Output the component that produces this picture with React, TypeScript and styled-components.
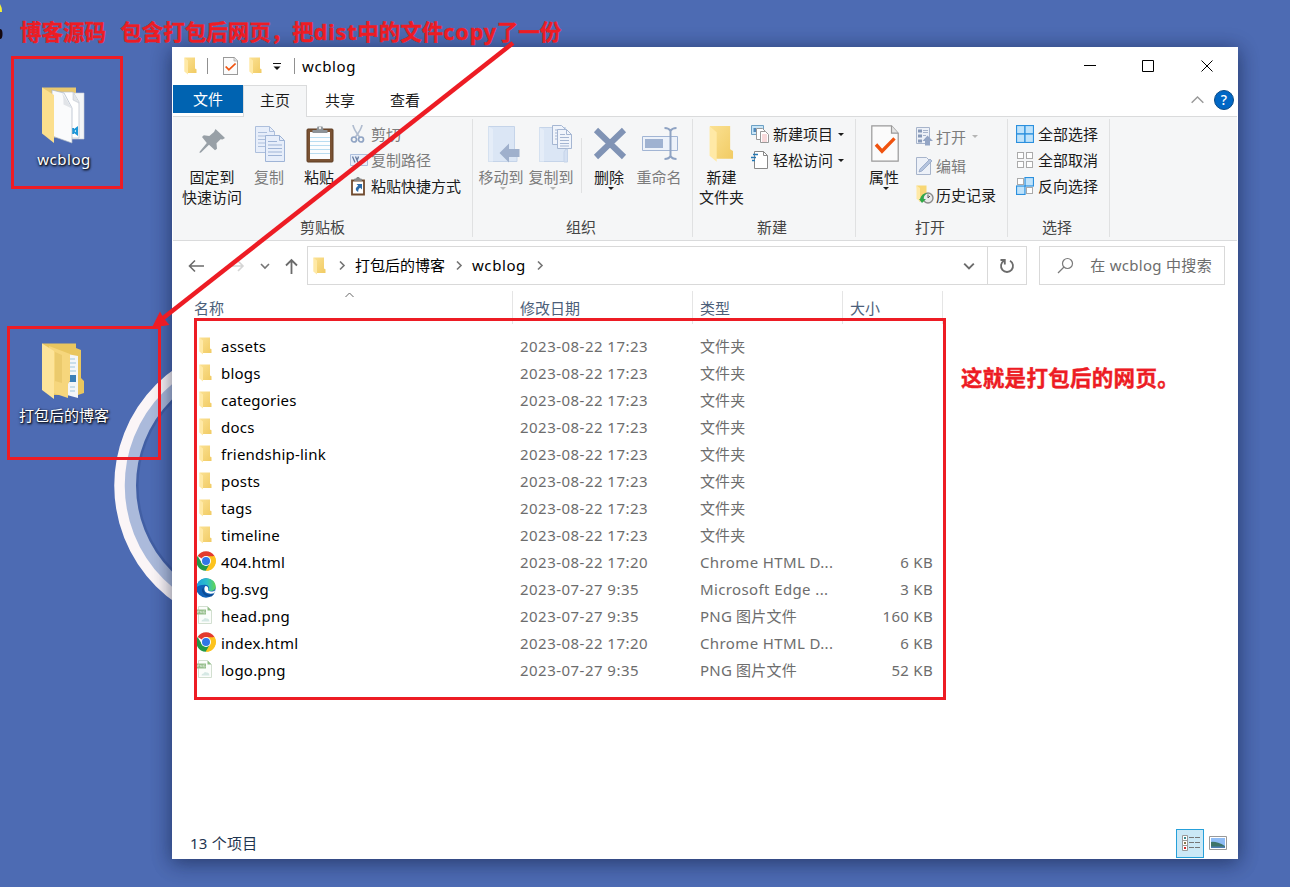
import React from "react";
import styled, { createGlobalStyle } from "styled-components";

const Global = createGlobalStyle`
  * { box-sizing: border-box; }
  body { margin: 0; background: #4d6bb3; }
  body, svg text { font-family: "Noto Sans", "Noto Sans CJK SC", sans-serif; }
`;

const Desktop = styled.div`
  position: relative;
  width: 1290px;
  height: 887px;
  overflow: hidden;
  background: #4d6bb3;
  font-size: 15px;
  line-height: 20px;
  color: #1b1b1b;
  white-space: nowrap;
`;
const Wallpaper = styled.svg`
  position: absolute;
  inset: 0;
`;
const Shortcut = styled.div<{ $top: number }>`
  position: absolute;
  left: 4px;
  top: ${(p) => p.$top}px;
  width: 120px;
  display: flex;
  flex-direction: column;
  align-items: center;
`;
const ShortcutLabel = styled.span<{ $ls?: number }>`
  margin-top: 3px;
  color: #fff;
  letter-spacing: ${(p) => p.$ls ?? 0}px;
  text-shadow: 1px 1px 2px #000, 0 1px 3px rgba(0, 0, 0, 0.8);
`;

const Window = styled.main`
  position: absolute;
  left: 172px;
  top: 47px;
  width: 1066px;
  height: 812px;
  padding: 0 1px;
  background: #fff;
  display: flex;
  flex-direction: column;
  box-shadow: 0 2px 18px rgba(10, 20, 50, 0.42), 0 6px 20px rgba(10, 20, 50, 0.2);
`;
const TitleBar = styled.header`
  height: 38px;
  padding: 0 24px 0 11px;
  display: flex;
  align-items: center;
`;
const TitleDivider = styled.i<{ $m: string }>`
  width: 1px;
  height: 16px;
  margin: ${(p) => p.$m};
  background: #909090;
`;
const Gap = styled.i<{ $w: number }>`
  flex: none;
  width: ${(p) => p.$w}px;
`;
const Fill = styled.i`
  flex: 1;
`;
const Text = styled.span<{ $ls?: number; $color?: string }>`
  letter-spacing: ${(p) => p.$ls ?? 0}px;
  color: ${(p) => p.$color ?? "inherit"};
`;
const WindowControls = styled.div`
  display: flex;
  align-items: center;
  gap: 46px;

  svg:last-child {
    margin-left: 1px;
  }
`;

const TabBar = styled.nav`
  height: 32px;
  display: flex;
  border-bottom: 1px solid #dadbdc;
`;
const FileTab = styled.div`
  width: 70px;
  height: 28px;
  background: #0063b1;
  color: #fff;
  text-align: center;
  line-height: 29px;
`;
const Tab = styled.div<{ $active?: boolean; $w: number }>`
  width: ${(p) => p.$w}px;
  height: 32px;
  text-align: center;
  line-height: ${(p) => (p.$active ? 29 : 31)}px;
  background: ${(p) => (p.$active ? "#f5f6f7" : "transparent")};
  border: ${(p) => (p.$active ? "1px solid #dadbdc" : "0")};
  border-bottom: 0;
`;
const TabTools = styled.div`
  margin-left: auto;
  padding: 0 3px 2px 0;
  display: flex;
  align-items: center;
  gap: 10px;
`;

const Ribbon = styled.section`
  height: 124px;
  background: #f5f6f7;
  border-bottom: 1px solid #dadbdc;
  display: flex;
  padding: 2px 0 3px;
`;
const Group = styled.div<{ $w: number }>`
  width: ${(p) => p.$w}px;
  border-right: 1px solid #e0e1e2;
  display: flex;
  flex-direction: column;
`;
const GroupBody = styled.div<{ $pl: number }>`
  flex: 1;
  display: flex;
  padding-left: ${(p) => p.$pl}px;
`;
const GroupLabel = styled.div<{ $pr?: number }>`
  height: 20px;
  padding-right: ${(p) => p.$pr ?? 2}px;
  text-align: center;
  color: #444;
`;
const BigButton = styled.div<{ $w: number; $off?: boolean }>`
  flex: none;
  width: ${(p) => p.$w}px;
  padding-top: 6px;
  display: flex;
  flex-direction: column;
  align-items: center;
  color: ${(p) => (p.$off ? "#7c7c7c" : "#1b1b1b")};
`;
const BigIcon = styled.div<{ $ml?: number }>`
  height: 42px;
  margin-left: ${(p) => p.$ml ?? 0}px;
  display: flex;
  align-items: flex-start;
`;
const Caret = styled.i<{ $off?: boolean; $m?: string }>`
  display: block;
  width: 0;
  height: 0;
  margin: ${(p) => p.$m ?? "0 0 0 3px"};
  border: 3.5px solid transparent;
  border-bottom: 0;
  border-top-color: ${(p) => (p.$off ? "#b5b5b5" : "#1b1b1b")};
`;
const SmallList = styled.div<{ $row: number; $ml: number; $pt: number }>`
  margin-left: ${(p) => p.$ml}px;
  padding-top: ${(p) => p.$pt}px;
  display: grid;
  grid-auto-rows: ${(p) => p.$row}px;
  align-content: start;
`;
const SmallButton = styled.div<{ $off?: boolean; $icon?: number }>`
  display: grid;
  grid-template-columns: ${(p) => p.$icon ?? 21}px auto auto;
  align-items: center;
  justify-content: start;
  color: ${(p) => (p.$off ? "#7c7c7c" : "#1b1b1b")};
`;
const InnerDivider = styled.i`
  width: 1px;
  height: 55px;
  margin: 19px 2px 0 5px;
  background: #e0e1e2;
`;

const AddressRow = styled.section`
  height: 50px;
  padding: 5px 12px 6px 15px;
  display: flex;
  align-items: center;
`;
const AddressBox = styled.div`
  width: 721px;
  height: 39px;
  border: 1px solid #d9d9d9;
  display: flex;
  align-items: center;
  padding-left: 5px;
  color: #000;
`;
const BoxText = styled.span<{ $ls?: number }>`
  letter-spacing: ${(p) => p.$ls ?? 0}px;
  padding-bottom: 2px;
`;
const RefreshCell = styled.div`
  width: 39px;
  height: 37px;
  border-left: 1px solid #d9d9d9;
  display: grid;
  place-items: center;
`;
const SearchBox = styled.div`
  width: 186px;
  height: 39px;
  margin-left: 12px;
  border: 1px solid #d9d9d9;
  display: flex;
  align-items: center;
  padding-left: 17px;
  gap: 16px;
  color: #6d6d6d;
`;

const columns = "340px 180px 150px 100px";
const HeaderRow = styled.div`
  height: 33px;
  display: grid;
  grid-template-columns: ${columns};
`;
const HeaderCell = styled.div<{ $pl: number }>`
  position: relative;
  padding: 7px 0 0 ${(p) => p.$pl}px;
  border-right: 1px solid #e5e5e5;
  color: #4c607a;
`;
const SortMark = styled.svg`
  position: absolute;
  left: 172px;
  top: 1px;
`;
const FileList = styled.div`
  flex: 1;
  padding-top: 8px;
`;
const FileRow = styled.div`
  height: 27px;
  display: grid;
  grid-template-columns: ${columns};
  align-items: center;
  color: #6d6d6d;
`;
const NameCell = styled.div`
  display: grid;
  grid-template-columns: 25px auto;
  padding-left: 23px;
  align-items: center;
  color: #000;
  letter-spacing: 0.22px;
`;
const Cell = styled.div<{ $ls?: number; $right?: boolean }>`
  padding-left: 7px;
  padding-right: ${(p) => (p.$right ? 10 : 0)}px;
  text-align: ${(p) => (p.$right ? "right" : "left")};
  letter-spacing: ${(p) => p.$ls ?? 0}px;
`;
const StatusBar = styled.footer`
  height: 31px;
  padding: 0 10px 1px 17px;
  display: flex;
  align-items: center;
  color: #1f3550;
`;
const ViewButton = styled.div`
  width: 28px;
  height: 29px;
  margin-right: 5px;
  background: #cbe8f6;
  border: 1px solid #26a0da;
  display: grid;
  place-items: center;
  padding-left: 2px;
`;

const Mark = styled.div<{ $x: number; $y: number; $w: number; $h: number }>`
  position: absolute;
  left: ${(p) => p.$x}px;
  top: ${(p) => p.$y}px;
  width: ${(p) => p.$w}px;
  height: ${(p) => p.$h}px;
  border: 3px solid #ed1c24;
`;
const Note = styled.div<{ $x: number; $y: number; $ls: number }>`
  position: absolute;
  left: ${(p) => p.$x}px;
  top: ${(p) => p.$y}px;
  font-size: 21.5px;
  line-height: 30px;
  font-weight: 700;
  color: #ed1c24;
  -webkit-text-stroke: 0.4px #ed1c24;
  letter-spacing: ${(p) => p.$ls}px;
  white-space: pre;
`;

const Folder = ({ w = 13, h = 18 }: { w?: number; h?: number }) => (
  <svg width={w} height={h} viewBox="0 0 13 18" preserveAspectRatio="none">
    <defs>
      <linearGradient id="fold" x1="0" x2="1" y1="0" y2="1">
        <stop offset="0" stopColor="#fbe193" />
        <stop offset="1" stopColor="#f1cb63" />
      </linearGradient>
    </defs>
    <path d="M.5.5h10.500v11l1.500.8V16H3z" fill="url(#fold)" />
    <path d="M.3.6 4 3.400v14L.3 14.600z" fill="#ffe9a6" />
  </svg>
);

const CheckDoc = ({ w = 15, h = 18 }: { w?: number; h?: number }) => (
  <svg width={w} height={h} viewBox="0 0 28 36" preserveAspectRatio="none">
    <path d="M.8.8H20.500L27.200 8V35.200H.8z" fill="#fbfbfb" stroke="#999" strokeWidth={w < 20 ? 2 : 1.2} />
    <path d="M20.500.8V8h6.700" fill="#e4e4e4" stroke="#999" strokeWidth="1.200" />
    <path d="M5 19l6 6.500L23.500 13" fill="none" stroke="#f0530f" strokeWidth="3.400" />
  </svg>
);

const Chevron = ({ dir = "right", color = "#757575", w = 10, sw = 1.6 }: { dir?: "right" | "down" | "up"; color?: string; w?: number; sw?: number }) => (
  <svg width={w} height={w} viewBox="0 0 10 10" fill="none" stroke={color} strokeWidth={sw}>
    <path d={dir === "right" ? "M3 .5l4 4-4 4" : dir === "down" ? "M1 3l4 4 4-4" : "M.5 7.500 5 3l4.500 4.500"} />
  </svg>
);

const PinIcon = () => (
  <svg width="28" height="30" viewBox="0 0 28 30" fill="#98a0a7">
    <path d="M17.500 4 27 13l-2.500 1.500-2-.3-4 4 .5 5.500-2 1.500-6-5.500L3 27.500 1.500 28l.3-1.600 7-8.400L4 12l1.800-1.700 5.500.6 4.700-4z" />
  </svg>
);
const CopyIcon = () => (
  <svg width="32" height="38" viewBox="0 0 32 38" fill="#e7eefa" stroke="#adbfdc">
    <path d="M1.500 1.500h14l5 5v21h-19z" />
    <path d="M15.500 1.500v5h5M4 7.500h9M4 11h14M4 14.500h14M4 18h14M4 21.500h14" fill="none" />
    <path d="M11.500 10.500h14l5 5v21h-19z" stroke="#9fb4d6" />
    <path d="M25.500 10.500v5h5M14 16.500h9M14 20h14M14 23.500h14M14 27h14M14 30.500h14" fill="none" stroke="#9fb4d6" />
  </svg>
);
const PasteIcon = () => (
  <svg width="28" height="38" viewBox="0 0 28 38">
    <rect x="1" y="4" width="26" height="33" rx="1" fill="#7a5233" stroke="#5e3c22" />
    <path d="M4 7h20v27H4z" fill="#fcfdfe" />
    <path d="M4 12.500h20M4 16.500h20M4 20.500h20M4 24.500h20M4 28.500h20" stroke="#b9dcf0" />
    <path d="M6.500 8V5h4l1-3.500h5l1 3.500h4v3z" fill="#8c9297" />
    <circle cx="14" cy="3" r="1.200" fill="#eee" />
  </svg>
);
const ScissorsIcon = () => (
  <svg width="15" height="20" viewBox="0 0 15 20" fill="none" stroke="#8fa3c3" strokeWidth="1.700">
    <path d="M3 1c.5 4 3.500 8 6.500 12M12 1c-.5 4-3.500 8-6.500 12" stroke="#b0bccf" />
    <circle cx="4" cy="15.500" r="2.500" />
    <circle cx="11" cy="15.500" r="2.500" />
  </svg>
);
const PathIcon = () => (
  <svg width="18" height="12" viewBox="0 0 18 12">
    <path d="M.5.5h17v11H.5z" fill="#e7eefa" stroke="#adbfdc" />
    <path d="M2.500 2.500l2.500 6M5.500 2.500l2.500 6M8.500 2.500l-1 3" fill="none" stroke="#64789c" strokeWidth="1.300" />
    <path d="M11 8.500h1M13 8.500h1" stroke="#7488aa" />
  </svg>
);
const PasteLinkIcon = () => (
  <svg width="16" height="19" viewBox="0 0 16 19">
    <path d="M2 3.500h12v14H2z" fill="#fff" stroke="#704a2e" strokeWidth="1.800" />
    <path d="M4.500 3.500h7V2H9.500L9 .5H7L6.500 2h-2z" fill="#888" stroke="#888" />
    <path d="M6.500 7H12v5.500l-1.800-1.800c-1.700 1-2 2.500-2 4.300C4.500 13 5.500 10.500 8.300 8.800z" fill="#2c6cab" />
  </svg>
);
const MoveIcon = () => (
  <svg width="33" height="38" viewBox="0 0 33 38">
    <path d="M1.500 1.500h26v24l2.500 2v9H1.500z" fill="#dbe6f5" stroke="#c5d4e9" />
    <path d="M1.500 1.500 6 4v32.500H1.500z" fill="#e5edf8" />
    <path d="M12.500 28 22 18.500V24h10.500v8H22v5.500z" fill="#9fb0cc" />
  </svg>
);
const CopyToIcon = () => (
  <svg width="34" height="39" viewBox="0 0 34 39">
    <path d="M1.500 2.500h26v34h-26z" fill="#dbe6f5" stroke="#c5d4e9" />
    <path d="M1.500 2.500 6 5v31.500H1.500z" fill="#e5edf8" />
    <path d="M14.500.5h9l4 4v15h-13z" fill="#f0f4fb" stroke="#a5b6d2" />
    <path d="M17 5h6M17 8h8M17 11h8M17 14h8" stroke="#a5b6d2" />
    <path d="M19.500 4.500h9l5 5v14h-14z" fill="#f0f4fb" stroke="#a5b6d2" />
    <path d="M28.500 4.500v5h5M22 9.500h5M22 12.500h9M22 15.500h9M22 18.500h9M22 21h9" fill="none" stroke="#a5b6d2" />
    <path d="M26 37V27q1-3 3.500-3v13z" fill="#d4e0f2" stroke="#c5d4e9" />
  </svg>
);
const DeleteIcon = () => (
  <svg width="34" height="36" viewBox="0 0 34 36">
    <path d="M3 5l28 27M31 5 3 32" stroke="#8093b5" strokeWidth="6" />
  </svg>
);
const RenameIcon = () => (
  <svg width="37" height="36" viewBox="0 0 37 36">
    <path d="M.5 11.500h35v14H.5z" fill="#edf2fa" stroke="#a2b5d4" />
    <path d="M3 14h18v9H3z" fill="#9fb2d1" />
    <path d="M22.500 3q4.500 0 6 3 1.500-3 6-3M28.500 5v27M22.500 34q4.500 0 6-3 1.500 3 6 3" fill="none" stroke="#8fa3c3" strokeWidth="2" />
  </svg>
);
const NewItemIcon = () => (
  <svg width="18" height="18" viewBox="0 0 18 18">
    <path d="M.5.500h12v9H.5z" fill="#c9e6f8" stroke="#6ca0c4" />
    <path d="M2.500 3h2.500v4H2.500z" fill="#518abc" />
    <path d="M5.500 3.500h6l3 3v8h-9z" fill="#fff" stroke="#999" />
    <path d="M9.500 6.500h5l3 3v8h-8z" fill="#fff" stroke="#999" />
    <path d="M11 10h5M11 12h5M11 14h5M11 16h5" stroke="#f0b4b8" />
  </svg>
);
const EasyIcon = () => (
  <svg width="18" height="18" viewBox="0 0 18 18">
    <path d="M3.500.5h9l4 4v13h-13z" fill="#fff" stroke="#888" />
    <path d="M12.500.5v4h4" fill="none" stroke="#888" />
    <path d="M2 3.500h5M0 6.500h5M1 9.500h3" stroke="#2578b4" strokeWidth="1.400" />
  </svg>
);
const OpenIcon = () => (
  <svg width="17" height="19" viewBox="0 0 17 19">
    <path d="M.5.500h13v16H.5z" fill="#edf1f8" stroke="#a7b4cb" />
    <path d="M2 2.500h4v3H2zM2 7.500h4v3H2zM2 12.500h4v3H2z" fill="#8799b8" />
    <path d="M7 3.500h5M7 5.500h5M7 8.500h3" stroke="#a7b4cb" />
    <path d="M11.500 8.500 17 14h-3v4.500H9V14H6.500z" fill="#93a5c5" />
  </svg>
);
const EditIcon = () => (
  <svg width="17" height="18" viewBox="0 0 17 18">
    <path d="M.5.500h10l4 4v13H.5z" fill="#edf1f8" stroke="#a7b4cb" />
    <path d="M3 15 4 12 14 2l2 2L6 14z" fill="#b4c4de" stroke="#93a5c5" strokeWidth=".8" />
  </svg>
);
const HistoryIcon = () => (
  <svg width="18" height="19" viewBox="0 0 18 19">
    <path d="M.5.500h10v16H3z" fill="#f8d775" />
    <path d="M.5.500 4 3v13L.5 14z" fill="#ffe9a6" />
    <circle cx="12" cy="13" r="5" fill="#e9e9e9" stroke="#8b8b8b" strokeWidth="1.400" />
    <path d="M12 13V9.500M12 13l2-2" stroke="#555" />
    <path d="M4 14a8 8 0 0 1 8-6c-3 1-4.500 3-4.500 6H10l-4 4-3-4z" fill="#2fa84a" />
  </svg>
);
const SelectIcon = ({ on }: { on: boolean[] }) => (
  <svg width="18" height="18" viewBox="0 0 18 18">
    {on.map((o, i) => {
      const col = i % 2;
      const row = Math.floor(i / 2);
      return o ? (
        <rect key={i} x={col * 8.5 + 0.5} y={row * 8.5 + 0.5} width="8.5" height="8.5" fill="#bfe3fb" stroke="#2b90de" strokeWidth="1.200" />
      ) : (
        <rect key={i} x={col * 9 + 1.5} y={row * 9 + 1.5} width="6" height="6" fill="#fff" stroke="#aaa" />
      );
    })}
  </svg>
);

const ChromeIcon = () => (
  <svg width="20" height="20" viewBox="0 0 20 20">
    <path d="M10 10 1.600 5A9.800 9.800 0 0 1 18.500 5z" fill="#e33b2e" />
    <path d="M10 10 18.500 5A9.800 9.800 0 0 1 10 19.800z" fill="#fcc31e" />
    <path d="M1.600 5A9.800 9.800 0 0 0 9.800 19.800L14 12.500 6 12.300z" fill="#229a48" />
    <path d="M10 5.300h8.600A9.800 9.800 0 0 1 10 19.800l4.200-7.500z" fill="#fcc31e" />
    <circle cx="10" cy="10" r="5" fill="#fff" />
    <circle cx="10" cy="10" r="4" fill="#3076e8" />
  </svg>
);
const EdgeIcon = () => (
  <svg width="20" height="20" viewBox="0 0 20 20">
    <defs>
      <linearGradient id="edge" x1="0" x2="1">
        <stop offset="0" stopColor="#1b9de2" />
        <stop offset=".55" stopColor="#2cc0c8" />
        <stop offset="1" stopColor="#62d64f" />
      </linearGradient>
    </defs>
    <circle cx="10" cy="10" r="9.700" fill="#0f62b8" />
    <path d="M.4 9.500C1 4 5 .3 10 .3c6 0 9.700 4 9.700 8.200 0 3.200-2.500 4.500-5 4.500-2 0-3-.8-2-2 .6-1 .3-4-3.500-4.200C5 6.600 1.500 8 .4 9.500z" fill="url(#edge)" />
    <path d="M8 9c-1.500 5 2 8 6.500 7.500 1.800-.2 3-.8 4-1.500l-1 1.700-2 1.800C9 19 5.500 15 6 11z" fill="#0c4a94" />
    <path d="M9.500 8c2 0 3 1.500 2.700 3-.7 1.500.5 2.500 3 2.500 1.700 0 3.200-.6 4.300-1.600L18.300 15c-4 1.500-9.900.5-9.900-4 0-1.500.4-2.500 1.100-3z" fill="#fff" />
  </svg>
);
const PngIcon = () => (
  <svg width="18" height="18" viewBox="0 0 18 18">
    <path d="M2.500.5h9l4 4v13h-13z" fill="#fbfdfb" stroke="#d2dfd0" />
    <path d="M11.500.5v4h4z" fill="#8fbd86" />
    <path d="M0 3.500h10v5H0z" fill="#98bf8e" />
    <path d="M1.500 7V5h1.500v1H1.500M4.500 7V5l1.500 2V5M9 5H7.500v2H9V6" fill="none" stroke="#dbe9d8" strokeWidth=".6" />
    <path d="M5.500 15.500q0-2 2-2 1-2.500 3-1 2.500-.5 3 3z" fill="#d5e8e4" />
  </svg>
);

const icons = { folder: <Folder />, chrome: <ChromeIcon />, edge: <EdgeIcon />, png: <PngIcon /> };
type Kind = keyof typeof icons;
const IconSlot = styled.span<{ $kind: Kind }>`
  display: flex;
  padding-left: ${(p) => (p.$kind === "folder" ? 3 : 0)}px;
  padding-bottom: ${(p) => (p.$kind === "folder" ? 0 : 1)}px;
`;

const folders = ["assets", "blogs", "categories", "docs", "friendship-link", "posts", "tags", "timeline"];
const files: [Kind, string, string, string, string][] = [
  ...folders.map((n): [Kind, string, string, string, string] => ["folder", n, "2023-08-22 17:23", "文件夹", ""]),
  ["chrome", "404.html", "2023-08-22 17:20", "Chrome HTML D...", "6 KB"],
  ["edge", "bg.svg", "2023-07-27 9:35", "Microsoft Edge ...", "3 KB"],
  ["png", "head.png", "2023-07-27 9:35", "PNG 图片文件", "160 KB"],
  ["chrome", "index.html", "2023-08-22 17:20", "Chrome HTML D...", "6 KB"],
  ["png", "logo.png", "2023-07-27 9:35", "PNG 图片文件", "52 KB"],
];
const typeSpacing: Record<Kind, number> = { folder: 0.1, chrome: 0.38, edge: 0.38, png: 0.2 };

export default function App() {
  return (
    <Desktop>
      <Global />
      <Wallpaper width="1290" height="887">
        <circle cx="257" cy="485.500" r="120" fill="none" stroke="#2c4580" strokeOpacity=".3" strokeWidth="3" />
        <circle cx="257" cy="485.500" r="127" fill="none" stroke="#abbadb" strokeWidth="12" />
        <circle cx="257" cy="485.500" r="137.500" fill="none" stroke="#fbf5f7" strokeWidth="10.500" />
        <path d="M0 4q2 3 2 8H0z" fill="#f4f03a" />
        <ellipse cx="0" cy="34" rx="2.500" ry="5" fill="#140810" />
      </Wallpaper>

      <Shortcut $top={86}>
        <svg width="46" height="60" viewBox="0 0 46 60">
          <path d="M1 1.500h34v50H12z" fill="#e9c86e" />
          <path d="M24 7h19v46H24z" fill="#f3f5f7" stroke="#c9ced6" strokeWidth=".6" />
          <path d="M18 6h14l6 10v36H20z" fill="#fff" stroke="#b8bfca" strokeWidth=".7" />
          <path d="M32 6v8l6 3" fill="#e1e4e8" stroke="#b8bfca" strokeWidth=".5" />
          <path d="M32 45l4-3v6zM32 42v6" fill="none" stroke="#1d97d8" strokeWidth="2" />
          <path d="M11 4l12 3 8 15v35L11 50z" fill="#fafbfc" stroke="#a9b4c4" strokeWidth=".7" />
          <path d="M21 6.500q2 5 1.500 12l8.500 4z" fill="#e1e4e8" />
          <path d="M1 1.500 13 9v48L1 47.500z" fill="#fbdf8d" />
        </svg>
        <ShortcutLabel $ls={0.500}>wcblog</ShortcutLabel>
      </Shortcut>
      <Shortcut $top={342}>
        <svg width="46" height="60" viewBox="0 0 46 60">
          <path d="M1 1.500h34V6l5 2v28l3 3v12l-6 2H12z" fill="#e9c65f" />
          <path d="M26 12l11 2v42l-11-3z" fill="#f4f6f8" />
          <path d="M29 17h5M29 21h6M29 25h5M29 29h6M29 45h5M29 49h5" stroke="#9fc6dd" />
          <path d="M28 33h7v7h-7z" fill="#3b7fb8" />
          <path d="M8 4l21 8v27l-2 3v14l-15-5z" fill="#f6d67c" />
          <path d="M1 1.500 13 9v48L1 48z" fill="#fde49a" />
          <path d="M14 10l7 3v28l-7-2z" fill="#e5c163" opacity=".6" />
        </svg>
        <ShortcutLabel>打包后的博客</ShortcutLabel>
      </Shortcut>

      <Window>
        <TitleBar>
          <Folder />
          <TitleDivider $m="0 15px 0 10px" />
          <CheckDoc />
          <Gap $w={11} />
          <Folder />
          <Gap $w={11} />
          <svg width="8" height="8" viewBox="0 0 8 8">
            <path d="M0 1.500h8" stroke="#111" />
            <path d="M.5 4.500h7L4 8z" fill="#111" />
          </svg>
          <TitleDivider $m="0 7px 0 13px" />
          <Text $ls={0.600} $color="#000">wcblog</Text>
          <Fill />
          <WindowControls>
            <svg width="12" height="12"><path d="M0 5.500h12" stroke="#000" /></svg>
            <svg width="12" height="12"><path d="M.5.500h11v11H.5z" fill="none" stroke="#000" /></svg>
            <svg width="12" height="12"><path d="M.5.500l11 11M11.500.500l-11 11" stroke="#000" /></svg>
          </WindowControls>
        </TitleBar>

        <TabBar>
          <FileTab>文件</FileTab>
          <Tab $active $w={64}>主页</Tab>
          <Tab $w={66}>共享</Tab>
          <Tab $w={64}>查看</Tab>
          <TabTools>
            <Chevron dir="up" color="#999" w={13} sw={1.100} />
            <svg width="20" height="20" viewBox="0 0 20 20">
              <circle cx="10" cy="10" r="9.500" fill="#0067c5" stroke="#0b4a86" />
              <text x="10" y="15" textAnchor="middle" fontSize="14" fontWeight="500" fill="#fff">?</text>
            </svg>
          </TabTools>
        </TabBar>

        <Ribbon>
          <Group $w={300}>
            <GroupBody $pl={0}>
              <BigButton $w={78}>
                <BigIcon><PinIcon /></BigIcon>
                <span>固定到</span>
                <span>快速访问</span>
              </BigButton>
              <BigButton $w={36} $off>
                <BigIcon $ml={2}><CopyIcon /></BigIcon>
                <span>复制</span>
              </BigButton>
              <Gap $w={8} />
              <BigButton $w={48}>
                <BigIcon $ml={2}><PasteIcon /></BigIcon>
                <span>粘贴</span>
              </BigButton>
              <SmallList $row={26} $ml={7} $pt={2}>
                <SmallButton $off><ScissorsIcon /><span>剪切</span></SmallButton>
                <SmallButton $off><PathIcon /><span>复制路径</span></SmallButton>
                <SmallButton><PasteLinkIcon /><span>粘贴快捷方式</span></SmallButton>
              </SmallList>
            </GroupBody>
            <GroupLabel $pr={0}>剪贴板</GroupLabel>
          </Group>
          <Group $w={220}>
            <GroupBody $pl={3}>
              <BigButton $w={50} $off>
                <BigIcon $ml={5}><MoveIcon /></BigIcon>
                <span>移动到</span>
                <Caret $off />
              </BigButton>
              <BigButton $w={50} $off>
                <BigIcon $ml={8}><CopyToIcon /></BigIcon>
                <span>复制到</span>
                <Caret $off />
              </BigButton>
              <InnerDivider />
              <BigButton $w={50}>
                <BigIcon $ml={2}><DeleteIcon /></BigIcon>
                <span>删除</span>
                <Caret />
              </BigButton>
              <BigButton $w={50} $off>
                <BigIcon $ml={2}><RenameIcon /></BigIcon>
                <span>重命名</span>
              </BigButton>
            </GroupBody>
            <GroupLabel $pr={3}>组织</GroupLabel>
          </Group>
          <Group $w={163}>
            <GroupBody $pl={3}>
              <BigButton $w={51}>
                <BigIcon><Folder w={25} h={38} /></BigIcon>
                <span>新建</span>
                <span>文件夹</span>
              </BigButton>
              <SmallList $row={26} $ml={4} $pt={2}>
                <SmallButton $icon={22}><NewItemIcon /><span>新建项目</span><Caret $m="0 0 0 5px" /></SmallButton>
                <SmallButton $icon={22}><EasyIcon /><span>轻松访问</span><Caret $m="0 0 0 5px" /></SmallButton>
              </SmallList>
            </GroupBody>
            <GroupLabel $pr={4}>新建</GroupLabel>
          </Group>
          <Group $w={152}>
            <GroupBody $pl={3}>
              <BigButton $w={50}>
                <BigIcon $ml={1}><CheckDoc w={28} h={37} /></BigIcon>
                <span>属性</span>
                <Caret />
              </BigButton>
              <SmallList $row={29} $ml={7} $pt={3}>
                <SmallButton $off $icon={20}><OpenIcon /><span>打开</span><Caret $off $m="0 0 0 6px" /></SmallButton>
                <SmallButton $off $icon={20}><EditIcon /><span>编辑</span></SmallButton>
                <SmallButton $icon={20}><HistoryIcon /><span>历史记录</span></SmallButton>
              </SmallList>
            </GroupBody>
            <GroupLabel $pr={3}>打开</GroupLabel>
          </Group>
          <Group $w={102}>
            <GroupBody $pl={0}>
              <SmallList $row={26} $ml={8} $pt={2}>
                <SmallButton $icon={22}><SelectIcon on={[true, true, true, true]} /><span>全部选择</span></SmallButton>
                <SmallButton $icon={22}><SelectIcon on={[false, false, false, false]} /><span>全部取消</span></SmallButton>
                <SmallButton $icon={22}><SelectIcon on={[false, true, true, false]} /><span>反向选择</span></SmallButton>
              </SmallList>
            </GroupBody>
            <GroupLabel $pr={3}>选择</GroupLabel>
          </Group>
        </Ribbon>

        <AddressRow>
          <svg width="16" height="14" viewBox="0 0 16 14" fill="none" stroke="#6b6b6b" strokeWidth="1.600">
            <path d="M16 7H2M7 1.500 1.500 7 7 12.500" />
          </svg>
          <Gap $w={26} />
          <svg width="16" height="14" viewBox="0 0 16 14" fill="none" stroke="#d5d5d5" strokeWidth="1.600">
            <path d="M0 7h13M8 2l5 5-5 5" />
          </svg>
          <Gap $w={14} />
          <Chevron dir="down" />
          <Gap $w={15} />
          <svg width="13" height="16" viewBox="0 0 13 16" fill="none" stroke="#6b6b6b" strokeWidth="1.800">
            <path d="M6.500 16V2M1 7.500 6.500 2 12 7.500" />
          </svg>
          <Gap $w={9} />
          <AddressBox>
            <Folder />
            <Gap $w={11} />
            <Chevron />
            <Gap $w={8} />
            <BoxText>打包后的博客</BoxText>
            <Gap $w={9} />
            <Chevron />
            <Gap $w={8} />
            <BoxText $ls={0.600}>wcblog</BoxText>
            <Gap $w={9} />
            <Chevron />
            <Fill />
            <Chevron dir="down" color="#6b6b6b" w={12} />
            <Gap $w={12} />
            <RefreshCell>
              <svg width="16" height="16" viewBox="0 0 16 16" fill="none" stroke="#6b6b6b" strokeWidth="1.800">
                <path d="M11 2.800A6 6 0 1 1 5 2.800M1.500 2h4.300v4.500" />
              </svg>
            </RefreshCell>
          </AddressBox>
          <SearchBox>
            <svg width="17" height="17" viewBox="0 0 17 17" fill="none" stroke="#7a7a7a" strokeWidth="1.200">
              <circle cx="10.500" cy="6.500" r="5" />
              <path d="M7 10 1 16" />
            </svg>
            <BoxText $ls={0.300}>在 wcblog 中搜索</BoxText>
          </SearchBox>
        </AddressRow>

        <HeaderRow>
          <HeaderCell $pl={21}>
            名称
            <SortMark width="10" height="6" fill="none" stroke="#666">
              <path d="M.5 5 4.500 1l4 4" />
            </SortMark>
          </HeaderCell>
          <HeaderCell $pl={7}>修改日期</HeaderCell>
          <HeaderCell $pl={7}>类型</HeaderCell>
          <HeaderCell $pl={7}>大小</HeaderCell>
        </HeaderRow>
        <FileList>
          {files.map(([kind, name, date, type, size]) => (
            <FileRow key={name}>
              <NameCell>
                <IconSlot $kind={kind}>{icons[kind]}</IconSlot>
                <span>{name}</span>
              </NameCell>
              <Cell $ls={0.470}>{date}</Cell>
              <Cell $ls={typeSpacing[kind]}>{type}</Cell>
              <Cell $ls={0.300} $right>{size}</Cell>
            </FileRow>
          ))}
        </FileList>
        <StatusBar>
          <Text $ls={0.250}>13 个项目</Text>
          <Fill />
          <ViewButton>
            <svg width="18" height="17" viewBox="0 0 18 17">
              <path d="M.5.500h5v5h-5zM.5 5.500h5v5h-5zM.5 10.500h5v5h-5z" fill="#fff" stroke="#999" />
              <path d="M2 2h2v2H2z" fill="#3a8a90" />
              <path d="M2 7h2v2H2z" fill="#8a7a50" />
              <path d="M2 12h2v2H2z" fill="#d02a2a" />
              <path d="M7 2.500h5M13 2.500h5M7 7.500h5M13 7.500h5M7 12.500h5M13 12.500h5" stroke="#777" />
            </svg>
          </ViewButton>
          <svg width="18" height="14" viewBox="0 0 18 14">
            <path d="M.5.500h17v13H.5z" fill="#fff" stroke="#999" />
            <path d="M2 2h14v10H2z" fill="#8fbcf5" />
            <path d="M2 6q5-1 14 4v2H2z" fill="#3f7468" />
            <path d="M2 10.500h14V12H2z" fill="#4f7fb5" />
          </svg>
        </StatusBar>
      </Window>

      <Mark $x={11} $y={56} $w={112} $h={133} />
      <Mark $x={7} $y={326} $w={154} $h={134} />
      <Mark $x={194} $y={318} $w={752} $h={382} />
      <Wallpaper width="1290" height="887">
        <path d="M513 43 162 319" stroke="#ed1c24" strokeWidth="4.500" />
        <path d="M152 327.500 160 311.500 163.500 318 169.500 325z" fill="#ed1c24" />
      </Wallpaper>
      <Note $x={20} $y={17} $ls={0}>
        博客源码<Text $ls={1.500}>{"  "}</Text>包含打包后网页，把<Text $ls={0.870}>dist</Text>中的文件<Text $ls={0.870}>copy</Text>了一份
      </Note>
      <Note $x={961} $y={363} $ls={0.300}>这就是打包后的网页。</Note>
    </Desktop>
  );
}
